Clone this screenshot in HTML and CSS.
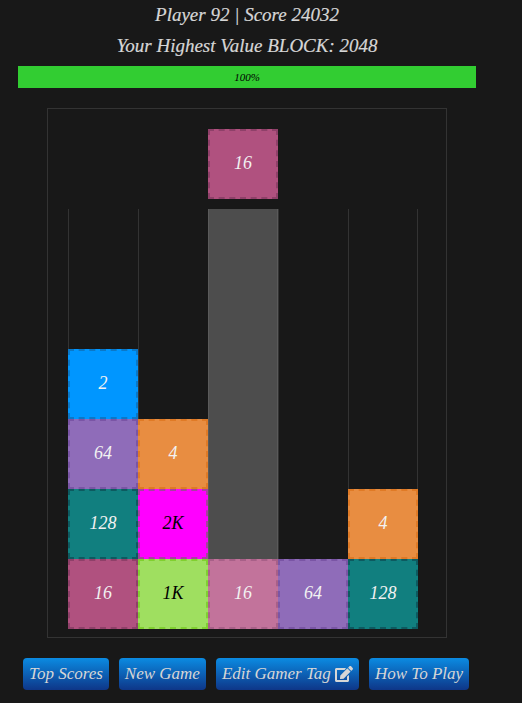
FILE: index.html
```html
<!DOCTYPE html>
<html lang="en">
<head>
<meta charset="utf-8">
<title>Blocks</title>
<link rel="stylesheet" href="styles.css">
</head>
<body>
<main class="page">
  <header class="head">
    <h1 class="title">Player 92 | Score 24032</h1>
    <h2 class="title">Your Highest Value BLOCK: 2048</h2>
    <div class="progress"><span class="progress-label">100%</span></div>
  </header>
  <section class="board">
    <div class="preview">
      <div class="block c16">16</div>
    </div>
    <div class="columns">
      <div class="col">
        <div class="block c2">2</div>
        <div class="block c64">64</div>
        <div class="block c128">128</div>
        <div class="block c16">16</div>
      </div>
      <div class="col">
        <div class="block c4">4</div>
        <div class="block c2k dark">2K</div>
        <div class="block c1k dark">1K</div>
      </div>
      <div class="col active">
        <div class="fill"></div>
        <div class="block c16l">16</div>
      </div>
      <div class="col">
        <div class="block c64">64</div>
      </div>
      <div class="col last">
        <div class="block c4">4</div>
        <div class="block c128">128</div>
      </div>
    </div>
  </section>
  <nav class="actions">
    <button class="btn">Top Scores</button>
    <button class="btn">New Game</button>
    <button class="btn">Edit Gamer Tag
      <svg class="icon" viewBox="0 0 576 512" aria-hidden="true"><path fill="currentColor" d="M402.6 83.2l90.2 90.2c3.8 3.8 3.8 10 0 13.8L274.4 405.6l-92.8 10.3c-12.4 1.4-22.9-9.1-21.5-21.5l10.3-92.8L388.8 83.2c3.8-3.8 10-3.8 13.8 0zm162-22.9l-48.8-48.8c-15.2-15.2-39.9-15.2-55.2 0l-35.4 35.4c-3.8 3.8-3.8 10 0 13.8l90.2 90.2c3.8 3.8 10 3.8 13.8 0l35.4-35.4c15.2-15.3 15.2-40 0-55.2zM384 346.2V448H64V128h229.8c3.2 0 6.2-1.3 8.5-3.5l40-40c7.6-7.6 2.2-20.5-8.5-20.5H48C21.5 64 0 85.5 0 112v352c0 26.5 21.5 48 48 48h352c26.5 0 48-21.5 48-48V306.2c0-10.7-12.9-16-20.5-8.5l-40 40c-2.2 2.3-3.5 5.3-3.5 8.5z"/></svg>
    </button>
    <button class="btn">How To Play</button>
  </nav>
</main>
</body>
</html>
```
FILE: styles.css
```css
* { box-sizing: border-box; }
html, body { margin: 0; height: 100%; }
body {
  background: #181818;
  color: #d6d6d6;
  font-family: "Liberation Serif", serif;
  font-style: italic;
  overflow: hidden;
}
.page { width: 494px; padding: 0 18px; }
.head { display: flex; flex-direction: column; }
.title {
  margin: 0;
  height: 30px;
  line-height: 30px;
  font-size: 19px;
  font-weight: 400;
  text-align: center;
  -webkit-text-stroke: .2px currentColor;
}
.title:first-child { height: 31px; }
.head .title + .title { height: 29px; margin-bottom: 6px; }
.progress {
  height: 22px;
  background: #32cd32;
  display: flex;
  align-items: center;
  justify-content: center;
}
.progress-label { color: #000; font-size: 11px; }
.board {
  margin: 20px 0 0 29px;
  width: 400px;
  height: 530px;
  border: 1px solid #333;
  padding: 20px;
}
.preview { display: flex; height: 80px; padding-left: 140px; }
.columns { display: flex; height: 420px; width: 350px; }
.col {
  width: 70px;
  flex: none;
  display: flex;
  flex-direction: column;
  justify-content: flex-end;
  box-shadow: inset 1px 0 0 #333;
}
.last { box-shadow: inset 1px 0 0 #333, inset -1px 0 0 #333; }
.active { box-shadow: none; }
.fill { flex: 1; background: #4d4d4d; border-left: 1px solid #5a5a5a; border-right: 1px solid #5a5a5a; }
.block {
  width: 70px;
  height: 70px;
  flex: none;
  border: 2px dashed transparent;
  color: #f2f2f2;
  font-size: 18px;
  padding-bottom: 2px;
  display: flex;
  align-items: center;
  justify-content: center;
}
.dark { color: #000; }
.c2 { background-color: #0096ff; border-color: #0a78c8; }
.c4 { background-color: #e88d41; border-color: #e07a25; }
.c16 { background-color: #b0517f; border-color: #8f4069; }
.c16l { background-color: #c2739b; border-color: #a86088; }
.c64 { background-color: #8f6cb9; border-color: #7a55a5; }
.c128 { background-color: #117f7f; border-color: #0d5a60; }
.c1k { background-color: #9fdf60; border-color: #80d030; }
.c2k { background-color: #ff00ff; border-color: #a83ea0; }
.actions {
  display: flex;
  gap: 10px;
  margin: 20px 0 0 5px;
}
.btn {
  height: 32px;
  padding: 0 6px;
  border: 0;
  border-radius: 4px;
  background: linear-gradient(#0b8be2, #0e3688);
  color: #d6d6d6;
  font: italic 400 17px "Liberation Serif", serif;
  display: flex;
  align-items: center;
  gap: 4px;
  white-space: nowrap;
}
.icon { width: 18px; height: 16px; flex: none; }
```
